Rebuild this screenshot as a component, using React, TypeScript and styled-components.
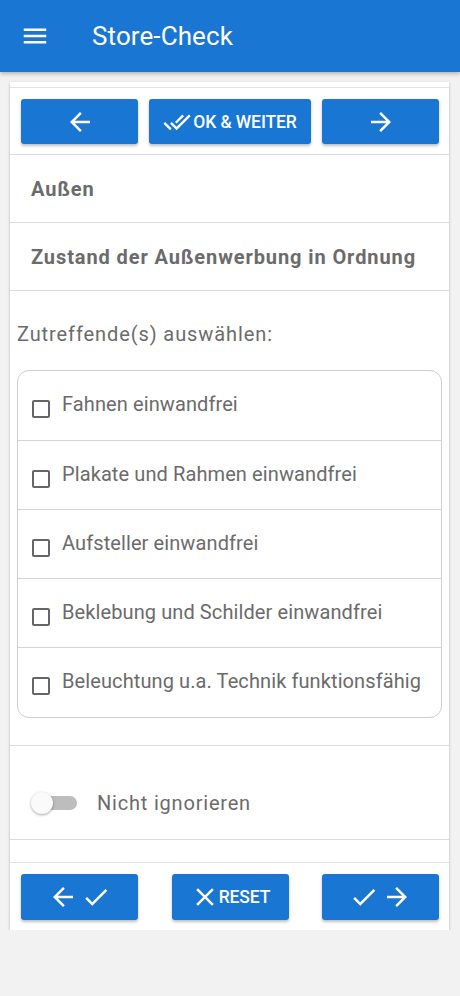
import React, { useState } from 'react';
import styled, { createGlobalStyle } from 'styled-components';

const GlobalStyle = createGlobalStyle`
  html, body {
    margin: 0;
    padding: 0;
    background: #f2f2f2;
    font-family: Roboto, 'Liberation Sans', sans-serif;
  }
  * { box-sizing: border-box; }
`;

const BLUE = '#1976d2';
const TEXT = '#6b6b6b';

const icons = {
  menu: 'M3 18h18v-2H3v2zm0-5h18v-2H3v2zm0-7v2h18V6H3z',
  back: 'M20 11H7.83l5.59-5.59L12 4l-8 8 8 8 1.41-1.41L7.83 13H20v-2z',
  forward: 'M12 4l-1.41 1.41L16.17 11H4v2h12.17l-5.58 5.59L12 20l8-8z',
  check: 'M9 16.17L4.83 12l-1.42 1.41L9 19 21 7l-1.41-1.41z',
  close: 'M19 6.41L17.59 5 12 10.59 6.41 5 5 6.41 10.59 12 5 17.59 6.41 19 12 13.41 17.59 19 19 17.59 13.41 12z',
  doneAll:
    'M18 7l-1.41-1.41-6.34 6.34 1.41 1.41L18 7zm4.24-1.41L11.66 16.17 7.48 12l-1.41 1.41L11.66 19l12-12-1.42-1.41zM.41 13.41L6 19l1.41-1.41L1.83 12 .41 13.41z',
  box: 'M19 5v14H5V5h14m0-2H5c-1.1 0-2 .9-2 2v14c0 1.1.9 2 2 2h14c1.1 0 2-.9 2-2V5c0-1.1-.9-2-2-2z',
  boxChecked:
    'M19 3H5c-1.11 0-2 .9-2 2v14c0 1.1.89 2 2 2h14c1.11 0 2-.9 2-2V5c0-1.1-.89-2-2-2zm-9 14l-5-5 1.41-1.41L10 14.17l7.59-7.59L19 8l-9 9z',
};

type IconName = keyof typeof icons;

const Icon = ({ name, size = 24, color = 'currentColor' }: { name: IconName; size?: number; color?: string }) => (
  <svg width={size} height={size} viewBox='0 0 24 24' fill={color} style={{ display: 'block', flexShrink: 0 }}>
    <path d={icons[name]} />
  </svg>
);

const AppBar = styled.header`
  height: 72px;
  background: ${BLUE};
  display: flex;
  align-items: center;
  padding-left: 20px;
  color: #fff;
  box-shadow: 0 2px 4px rgba(0, 0, 0, 0.25);
  position: relative;
  z-index: 1;
`;

const MenuButton = styled.div`
  width: 30px;
  height: 30px;
  margin-right: 42px;
`;

const Title = styled.h1`
  margin: 0;
  font-size: 26px;
  font-weight: 400;
  letter-spacing: 0.1px;
`;

const Card = styled.main`
  margin: 10px 11px 0 10px;
  background: #fff;
  padding-top: 5px;
  box-shadow: 0 2px 3px rgba(0, 0, 0, 0.2), 0 0 2px rgba(0, 0, 0, 0.08);
`;

const Toolbar = styled.div<{ $spread?: boolean }>`
  display: flex;
  justify-content: ${(p) => (p.$spread ? 'space-between' : 'flex-start')};
  gap: 11px;
  padding: 11px 10px 10px 11px;
  border-top: 1px solid #e3e3e3;
`;

const Button = styled.button<{ $width: number; $height: number; $gap?: number }>`
  width: ${(p) => p.$width}px;
  height: ${(p) => p.$height}px;
  border: none;
  border-radius: 3px;
  background: ${BLUE};
  color: #fff;
  display: flex;
  align-items: center;
  justify-content: center;
  gap: ${(p) => p.$gap ?? 0}px;
  font-family: Roboto, 'Liberation Sans', sans-serif;
  font-weight: 500;
  font-size: 17.5px;
  text-transform: uppercase;
  padding: 0;
  box-shadow: 0 2px 3px rgba(0, 0, 0, 0.25);
`;

const ButtonLabel = styled.span<{ $shift?: number }>`
  margin-left: ${(p) => p.$shift ?? 0}px;
  letter-spacing: -0.1px;
`;

const Section = styled.div<{ $height: number }>`
  min-height: ${(p) => p.$height}px;
  border-top: 1px solid #dcdcdc;
  display: flex;
  align-items: center;
  padding: 0 21px;
  color: ${TEXT};
  font-weight: 700;
  font-size: 20px;
  letter-spacing: 0.9px;
`;

const ChoiceSection = styled.div`
  border-top: 1px solid #dcdcdc;
  padding: 31px 7px 27px 7px;
`;

const Prompt = styled.div`
  color: ${TEXT};
  font-size: 20px;
  line-height: 24px;
  letter-spacing: 0.9px;
  margin-bottom: 24px;
`;

const Group = styled.div`
  border: 1px solid #cfcfcf;
  border-radius: 12px;
`;

const Option = styled.label`
  height: 69px;
  display: flex;
  align-items: center;
  gap: 9px;
  padding-left: 11px;
  color: ${TEXT};
  font-size: 20px;
  letter-spacing: 0.1px;
  cursor: pointer;
  & + & {
    border-top: 1px solid #d6d6d6;
  }
  &:last-child {
    height: 70px;
  }
`;

const OptionText = styled.span`
  margin-top: -3px;
`;

const BoxWrap = styled.span`
  margin-top: 7px;
`;

const ToggleRow = styled.div`
  border-top: 1px solid #dcdcdc;
  border-bottom: 1px solid #dcdcdc;
  height: 95px;
  display: flex;
  align-items: center;
  padding: 20px 0 0 21px;
  gap: 20px;
  color: ${TEXT};
  font-size: 20px;
  letter-spacing: 0.8px;
`;

const Track = styled.span<{ $on: boolean }>`
  position: relative;
  width: 46px;
  height: 22px;
  display: inline-flex;
  align-items: center;
  &::before {
    content: '';
    position: absolute;
    left: 6px;
    right: 0;
    height: 14px;
    border-radius: 7px;
    background: ${(p) => (p.$on ? '#90caf9' : '#bdbdbd')};
  }
`;

const Thumb = styled.span<{ $on: boolean }>`
  position: absolute;
  left: ${(p) => (p.$on ? 24 : 0)}px;
  width: 22px;
  height: 22px;
  border-radius: 50%;
  background: ${(p) => (p.$on ? BLUE : '#fafafa')};
  box-shadow: 0 1px 3px rgba(0, 0, 0, 0.35);
`;

const Spacer = styled.div`
  height: 22px;
`;

const options = [
  'Fahnen einwandfrei',
  'Plakate und Rahmen einwandfrei',
  'Aufsteller einwandfrei',
  'Beklebung und Schilder einwandfrei',
  'Beleuchtung u.a. Technik funktionsfähig',
];

export default function App() {
  const [checked, setChecked] = useState<boolean[]>(options.map(() => false));
  const [ignore, setIgnore] = useState(false);

  const toggle = (i: number) => setChecked((c) => c.map((v, j) => (j === i ? !v : v)));

  return (
    <>
      <GlobalStyle />
      <AppBar>
        <MenuButton>
          <Icon name='menu' size={30} />
        </MenuButton>
        <Title>Store-Check</Title>
      </AppBar>
      <Card>
        <Toolbar>
          <Button $width={117} $height={45}>
            <Icon name='back' size={30} />
          </Button>
          <Button $width={162} $height={45} $gap={2}>
            <Icon name='doneAll' size={28} />
            <ButtonLabel>OK &amp; Weiter</ButtonLabel>
          </Button>
          <Button $width={117} $height={45}>
            <Icon name='forward' size={30} />
          </Button>
        </Toolbar>
        <Section $height={68}>Außen</Section>
        <Section $height={68}>Zustand der Außenwerbung in Ordnung</Section>
        <ChoiceSection>
          <Prompt>Zutreffende(s) auswählen:</Prompt>
          <Group>
            {options.map((o, i) => (
              <Option key={o} onClick={() => toggle(i)}>
                <BoxWrap>
                  <Icon name={checked[i] ? 'boxChecked' : 'box'} color={checked[i] ? BLUE : '#666'} />
                </BoxWrap>
                <OptionText>{o}</OptionText>
              </Option>
            ))}
          </Group>
        </ChoiceSection>
        <ToggleRow onClick={() => setIgnore(!ignore)}>
          <Track $on={ignore}>
            <Thumb $on={ignore} />
          </Track>
          Nicht ignorieren
        </ToggleRow>
        <Spacer />
        <Toolbar $spread>
          <Button $width={117} $height={46} $gap={3}>
            <Icon name='back' size={30} />
            <Icon name='check' size={30} />
          </Button>
          <Button $width={117} $height={46}>
            <Icon name='close' size={30} />
            <ButtonLabel $shift={-1}>Reset</ButtonLabel>
          </Button>
          <Button $width={117} $height={46} $gap={3}>
            <Icon name='check' size={30} />
            <Icon name='forward' size={30} />
          </Button>
        </Toolbar>
      </Card>
    </>
  );
}
